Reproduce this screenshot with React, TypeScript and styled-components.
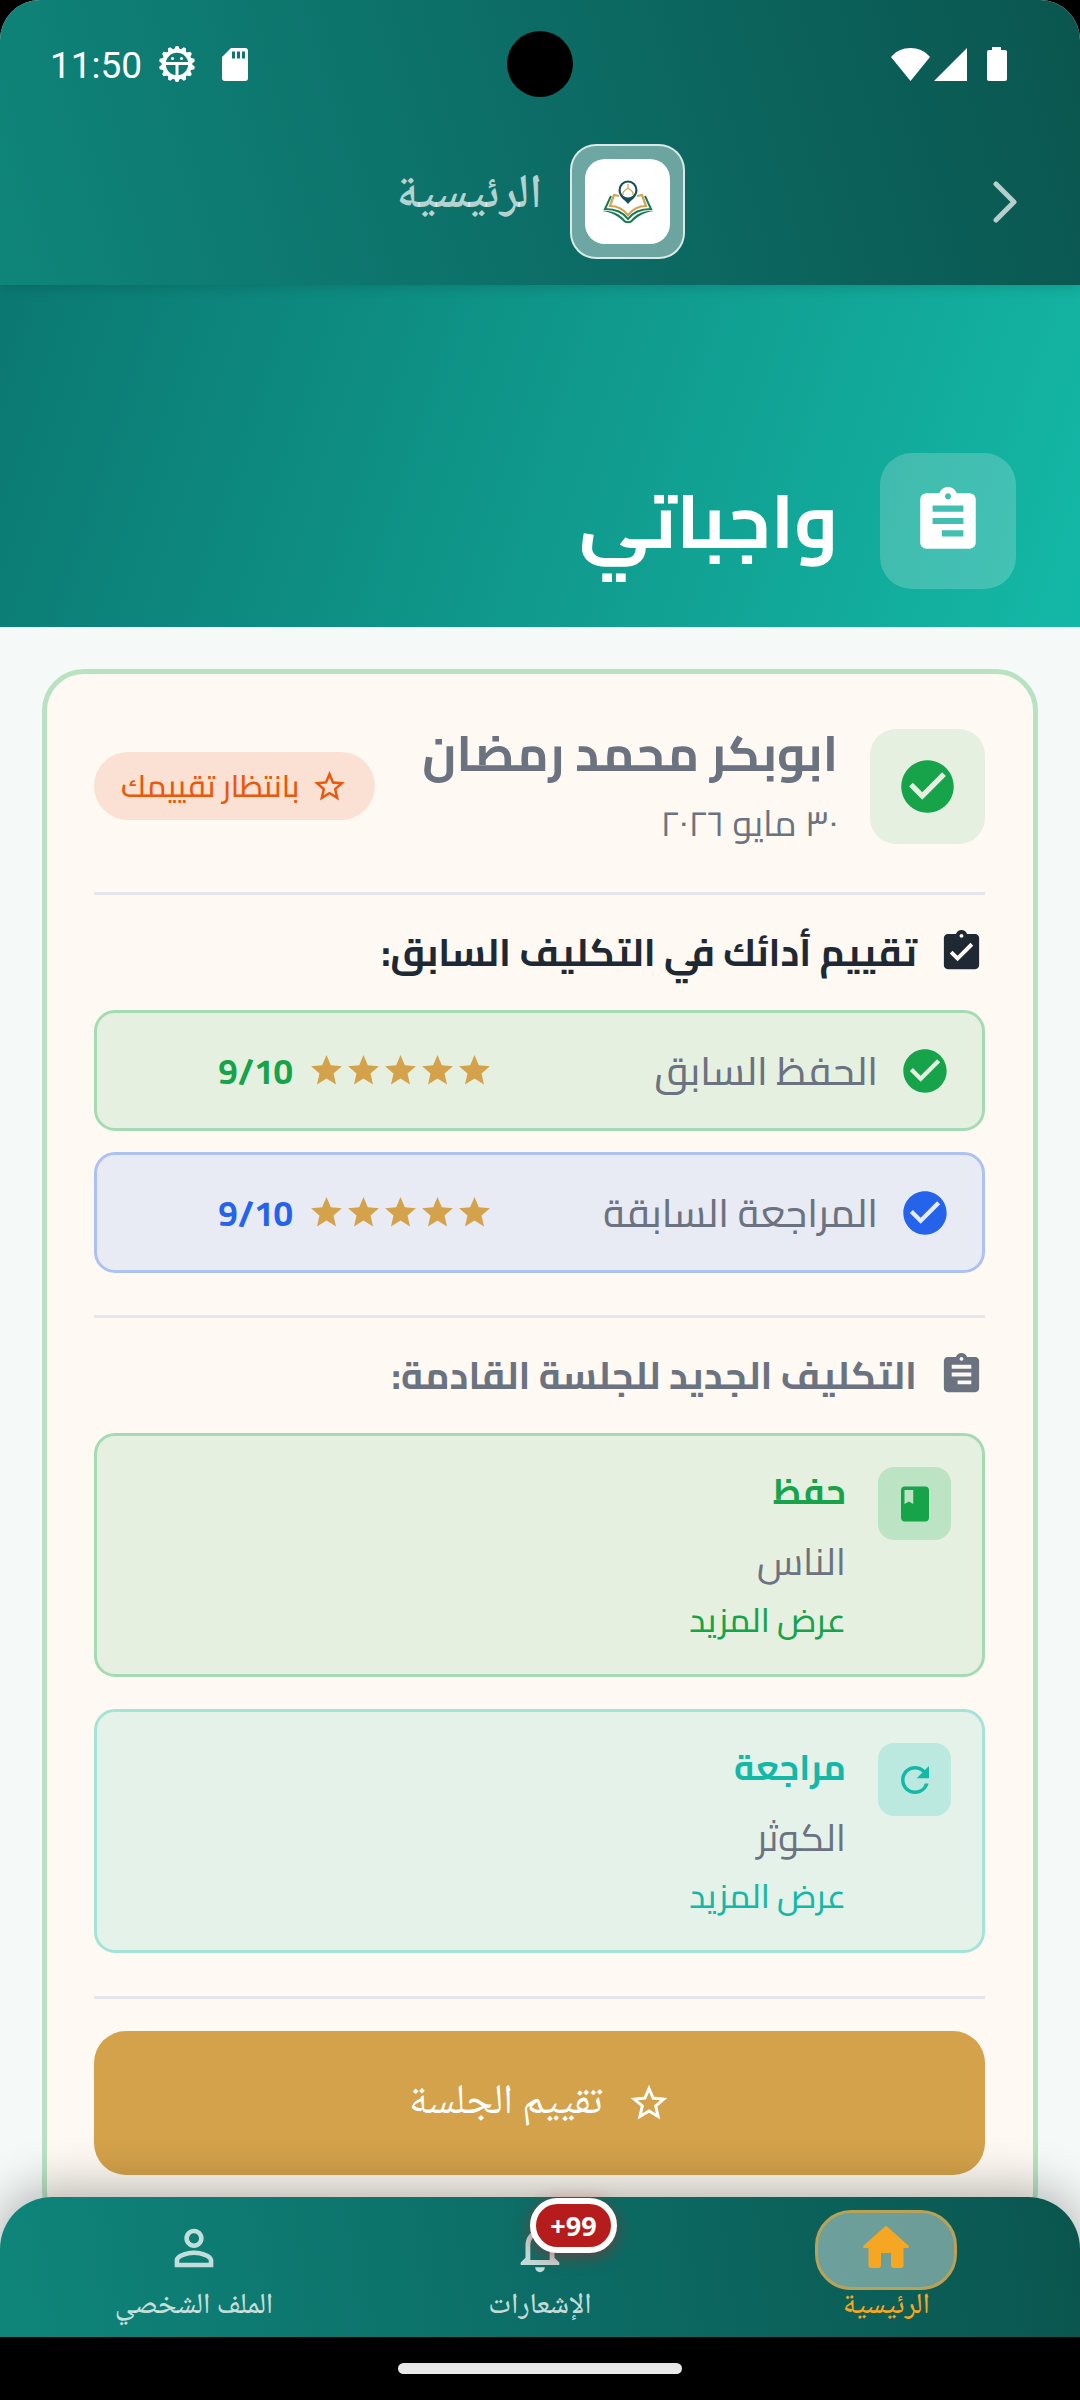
import React from "react";
import styled, { createGlobalStyle } from "styled-components";
import {
  MdAssignment,
  MdAssignmentTurnedIn,
  MdBook,
  MdCheckCircle,
  MdNotificationsNone,
  MdPersonOutline,
  MdRefresh,
  MdStar,
  MdStarBorder,
} from "react-icons/md";

const Global = createGlobalStyle`
  *, *::before, *::after { box-sizing: border-box; }
  body { margin: 0; background: #000; }
  h1, h2, h3, p, ul { margin: 0; padding: 0; font-weight: inherit; font-size: inherit; }
  button { border: 0; padding: 0; background: none; color: inherit; font: inherit; cursor: pointer; }
  svg { display: block; flex: none; }
`;

const arabic = `"Cairo", "DejaVu Sans", sans-serif`;
const naskh = `"Noto Naskh Arabic UI", "Noto Naskh Arabic", "Noto Sans Arabic", "DejaVu Sans", sans-serif`;

const Screen = styled.div`
  direction: rtl;
  display: flex;
  flex-direction: column;
  height: 100vh;
  overflow: hidden;
  border-radius: 40px 40px 0 0;
  background: #f5f9f8;
  font-family: ${arabic};
  color: #6b7280;
`;

const TopBar = styled.header`
  flex: none;
  position: relative;
  z-index: 1;
  background: linear-gradient(255deg, #0a564f, #0c6d66 50%, #0f857a);
  box-shadow: 0 2px 12px rgba(0, 0, 0, 0.15);
`;

const StatusBar = styled.div`
  direction: ltr;
  display: grid;
  grid-template-columns: 1fr auto 1fr;
  align-items: center;
  height: 128px;
  padding: 0 73px 0 50px;
  color: #fff;
  font: 400 37px/44px Roboto, sans-serif;
`;

const StatusGroup = styled.div<{ $end?: boolean }>`
  display: flex;
  align-items: center;
  justify-content: ${(p) => (p.$end ? "flex-end" : "flex-start")};
  gap: ${(p) => (p.$end ? "4px" : "16px")};
`;

const Clock = styled.span`
  padding-top: 4px;
`;

const StatusIcons = styled.span`
  display: flex;
  align-items: center;
  gap: 26px;
`;

const Camera = styled.span`
  width: 66px;
  height: 66px;
  margin-left: 23px;
  border-radius: 50%;
  background: #000;
`;

const TitleBar = styled.div`
  display: grid;
  grid-template-columns: 96px 1fr 96px;
  align-items: center;
  padding: 16px 27px 26px;
`;

const BackButton = styled.button`
  display: flex;
  justify-content: center;
  color: rgba(255, 255, 255, 0.7);
`;

const Brand = styled.div`
  display: flex;
  align-items: center;
  justify-content: center;
  gap: 28px;
`;

const LogoFrame = styled.span`
  display: flex;
  padding: 13px;
  border: 2px solid rgba(255, 255, 255, 0.75);
  border-radius: 26px;
  background: rgba(255, 255, 255, 0.4);
`;

const LogoTile = styled.span`
  display: flex;
  align-items: center;
  justify-content: center;
  width: 85px;
  height: 85px;
  border-radius: 20px;
  background: #fff;
`;

const BrandName = styled.p`
  padding-bottom: 12px;
  color: rgba(255, 255, 255, 0.7);
  font: 600 48px/60px ${naskh};
`;

const Hero = styled.section`
  flex: none;
  display: flex;
  align-items: center;
  gap: 42px;
  padding: 168px 64px 38px;
  background: linear-gradient(108deg, #0b7871, #14b8a6);
`;

const HeroIcon = styled.span`
  display: flex;
  align-items: center;
  justify-content: center;
  width: 136px;
  height: 136px;
  border-radius: 32px;
  background: rgba(255, 255, 255, 0.2);
  color: #fff;
`;

const HeroTitle = styled.h1`
  color: #fff;
  font-weight: 700;
  font-size: 75px;
  line-height: 100px;
`;

const Mirrored = styled.span`
  display: flex;
  transform: scaleX(-1);
`;

const Content = styled.main`
  flex: 1;
  min-height: 0;
  overflow: hidden;
  padding: 42px 42px 0;
`;

const Card = styled.article`
  min-height: 1540px;
  padding: 53px 48px 54px 47px;
  border: 5px solid #b8e2c2;
  border-radius: 42px;
  background: #fefaf3;
`;

const CardHead = styled.div`
  display: flex;
  align-items: center;
  gap: 32px;
  padding-bottom: 47px;
`;

const StateIcon = styled.span`
  flex: none;
  display: flex;
  align-items: center;
  justify-content: center;
  width: 115px;
  height: 115px;
  border-radius: 26px;
  background: #e6f0e0;
  color: #16a34a;
`;

const Teacher = styled.div`
  flex: 1;
  white-space: nowrap;
`;

const TeacherName = styled.h2`
  font-weight: 700;
  font-size: 49px;
  line-height: 52px;
`;

const SessionDate = styled.p`
  font-size: 36px;
  line-height: 44px;
  padding-top: 22px;
`;

const Pending = styled.span`
  flex: none;
  display: flex;
  align-items: center;
  gap: 12px;
  height: 68px;
  padding: 0 27px;
  border-radius: 34px;
  background: #fbe1d3;
  color: #ea580c;
  font-weight: 500;
  font-size: 31px;
  white-space: nowrap;
`;

const Rule = styled.hr`
  height: 3px;
  margin: 0;
  border: 0;
  background: #e5e7eb;
`;

const SectionTitle = styled.h3<{ $dark?: boolean }>`
  display: flex;
  align-items: center;
  gap: 21px;
  height: 115px;
  padding-bottom: 2px;
  color: ${(p) => (p.$dark ? "#1f2933" : "#6b7280")};
  font-weight: 700;
  font-size: 38px;
`;

const tones = {
  green: { ink: "#16a34a", fill: "#e6f0e0", line: "#a5dbb4", chip: "#bbe3c4" },
  blue: { ink: "#2563eb", fill: "#e8ebf3", line: "#adc2f3", chip: "#c6d4f5" },
  teal: { ink: "#14b8a6", fill: "#e5f2ea", line: "#a4e3d8", chip: "#bbe8df" },
};
type Tone = keyof typeof tones;

const Scores = styled.div`
  display: flex;
  flex-direction: column;
  gap: 21px;
  padding-bottom: 42px;
`;

const ScoreRow = styled.div<{ $tone: Tone }>`
  display: flex;
  align-items: center;
  height: 121px;
  padding: 0 31px;
  border: 3px solid ${(p) => tones[p.$tone].line};
  border-radius: 21px;
  background: ${(p) => tones[p.$tone].fill};
  color: ${(p) => tones[p.$tone].ink};
`;

const ScoreLabel = styled.p`
  flex: 1;
  padding-inline-start: 21px;
  color: #6b7280;
  font-weight: 500;
  font-size: 39px;
  white-space: nowrap;
`;

const Stars = styled.div`
  display: flex;
  color: #d4a24a;
`;

const ScoreValue = styled.p`
  direction: ltr;
  width: 180px;
  padding-right: 15px;
  text-align: right;
  font-weight: 700;
  font-size: 35px;
`;

const Tasks = styled.div`
  display: flex;
  flex-direction: column;
  gap: 32px;
  padding-bottom: 43px;
`;

const TaskBox = styled.section<{ $tone: Tone }>`
  display: flex;
  align-items: flex-start;
  gap: 32px;
  padding: 31px 31px 27px;
  border: 3px solid ${(p) => tones[p.$tone].line};
  border-radius: 21px;
  background: ${(p) => tones[p.$tone].fill};
  color: ${(p) => tones[p.$tone].ink};
`;

const TaskIcon = styled.span<{ $tone: Tone }>`
  display: flex;
  align-items: center;
  justify-content: center;
  width: 73px;
  height: 73px;
  border-radius: 16px;
  background: ${(p) => tones[p.$tone].chip};
`;

const TaskText = styled.div`
  display: flex;
  flex-direction: column;
  align-items: flex-start;
`;

const TaskName = styled.h4`
  margin: 0;
  font-weight: 700;
  font-size: 35px;
  line-height: 48px;
`;

const TaskSura = styled.p`
  padding-top: 14px;
  color: #6b7280;
  font-size: 38px;
  line-height: 64px;
`;

const MoreButton = styled.button`
  font-weight: 500;
  font-size: 33px;
  line-height: 54px;
`;

const RateButton = styled.button`
  display: flex;
  align-items: center;
  justify-content: center;
  gap: 24px;
  width: 100%;
  height: 144px;
  margin-top: 32px;
  border-radius: 32px;
  background: #d4a24a;
  color: #fff;
  font: 400 42px/60px ${naskh};
`;

const NavBar = styled.nav`
  flex: none;
  position: relative;
  display: grid;
  grid-template-columns: repeat(3, 1fr);
  height: 140px;
  padding: 0 21px;
  border-radius: 52px 52px 0 0;
  background: linear-gradient(263deg, #0a564f, #0c6d66 50%, #0f857a);
  box-shadow: 0 -8px 50px rgba(0, 0, 0, 0.3);
`;

const BottomArea = styled.footer`
  flex: none;
  margin-top: -54px;
  background: linear-gradient(transparent 54px, #000 54px);
`;

const NavItem = styled.button<{ $active?: boolean }>`
  display: flex;
  flex-direction: column;
  align-items: center;
  padding-top: 13px;
  color: ${(p) => (p.$active ? "#f5a623" : "rgba(255, 255, 255, 0.75)")};
  font: 500 29px/32px ${naskh};
`;

const NavIcon = styled.span<{ $active?: boolean }>`
  position: relative;
  display: flex;
  align-items: center;
  justify-content: center;
  width: 142px;
  height: 80px;
  padding-bottom: 4px;
  border: 3px solid ${(p) => (p.$active ? "#b9a257" : "transparent")};
  border-radius: 36px;
  background: ${(p) => (p.$active ? "rgba(255, 255, 255, 0.4)" : "transparent")};
`;

const Badge = styled.span`
  direction: ltr;
  position: absolute;
  top: -15px;
  left: 58px;
  width: 87px;
  height: 55px;
  border: 6px solid #fff;
  border-radius: 28px;
  background: #b71c1c;
  box-shadow: 0 4px 16px rgba(183, 28, 28, 0.5);
  color: #fff;
  text-align: center;
  font: 700 27px/43px "Noto Sans", sans-serif;
`;

const GestureArea = styled.div`
  display: flex;
  align-items: center;
  justify-content: center;
  height: 63px;
  background: #000;
`;

const GestureBar = styled.span`
  width: 284px;
  height: 11px;
  border-radius: 6px;
  background: #ebebeb;
`;

const teeth = Array.from({ length: 14 }, (_, i) => (i * 360) / 14);

const BugIcon = () => (
  <svg width="38" height="38" viewBox="0 0 38 38" fill="none" stroke="#fff">
    {teeth.map((a) => (
      <path key={a} d="M15.500 5.500 17.800 1h2.400l2.300 4.500z" fill="#fff" stroke="none" transform={`rotate(${a} 19 19)`} />
    ))}
    <circle cx="19" cy="19" r="13.200" strokeWidth="4" />
    <path d="M6 18.500h26M19 19v14" strokeWidth="3" />
    <circle cx="14.500" cy="13.500" r="1.500" fill="#fff" stroke="none" />
    <circle cx="23.500" cy="13.500" r="1.500" fill="#fff" stroke="none" />
  </svg>
);

const CardIcon = () => (
  <svg width="26" height="33" viewBox="0 0 26 33">
    <path
      fill="#fff"
      fillRule="evenodd"
      d="M9 0h14a3 3 0 0 1 3 3v27a3 3 0 0 1-3 3H3a3 3 0 0 1-3-3V9zM10 3.500v7h3v-7zM15 3.500v7h3v-7zM20 3.500v7h3v-7z"
    />
  </svg>
);

const WifiIcon = () => (
  <svg width="39" height="33" viewBox="0 0 39 33">
    <path fill="#fff" d="M19.500 33 0 9C5 3 12 0 19.500 0S34 3 39 9z" />
  </svg>
);

const SignalIcon = () => (
  <svg width="33" height="33" viewBox="0 0 33 33">
    <path fill="#fff" d="M33 0v33H0z" />
  </svg>
);

const BatteryIcon = () => (
  <svg width="36" height="34" viewBox="0 0 36 34">
    <path fill="#fff" d="M21 0h9v3h4a2 2 0 0 1 2 2v27a2 2 0 0 1-2 2H18a2 2 0 0 1-2-2V5a2 2 0 0 1 2-2h3z" />
  </svg>
);

const Chevron = () => (
  <svg width="24" height="42" viewBox="0 0 24 42" fill="none">
    <path d="m3 3 18 18L3 39" stroke="currentColor" strokeWidth="5" strokeLinecap="round" strokeLinejoin="round" />
  </svg>
);

const Logo = () => (
  <svg width="54" height="44" viewBox="0 0 54 44" fill="none">
    <path d="M10 16 4 29c9 0 18 3 23 10 5-7 14-10 23-10l-6-13" stroke="#187a52" strokeWidth="2" />
    <path d="M1 31c10-1 17 3 22 8 2 3 6 3 8 0 5-5 12-9 22-8-9 1-16 5-21 10-2 3-8 3-10 0C17 36 10 32 1 31z" fill="#187a52" />
    <path d="M18 16l-5-1-4 11c8 0 14 4 18 9 4-5 10-9 18-9l-4-11-5 1" stroke="#d2a351" strokeWidth="2.200" />
    <path d="M27 24c-3-4-9.500-7-9.500-14a9.500 9.500 0 0 1 19 0c0 7-6.500 10-9.500 14z" fill="#154f5c" />
    <circle cx="27" cy="10" r="7.400" fill="#fff" />
    <path d="M22 15v-2c1-3 3-3 5-5 2 2 4 2 5 5v2M27 8V4" stroke="#d2a351" strokeWidth="1.200" />
  </svg>
);

const HomeIcon = () => (
  <svg width="60" height="60" viewBox="0 0 24 24" fill="currentColor">
    <path d="M10 19v-5h4v5c0 .55.45 1 1 1h3c.55 0 1-.45 1-1v-7h1.700c.46 0 .68-.57.33-.87L12.670 3.600c-.38-.34-.96-.34-1.340 0l-8.360 7.530c-.34.3-.13.87.33.87H5v7c0 .55.45 1 1 1h3c.55 0 1-.45 1-1z" />
  </svg>
);

const scores: { label: string; value: string; tone: Tone }[] = [
  { label: "الحفظ السابق", value: "9/10", tone: "green" },
  { label: "المراجعة السابقة", value: "9/10", tone: "blue" },
];

const tasks: { name: string; sura: string; tone: Tone; icon: React.ReactNode }[] = [
  { name: "حفظ", sura: "الناس", tone: "green", icon: <MdBook size={42} /> },
  { name: "مراجعة", sura: "الكوثر", tone: "teal", icon: <MdRefresh size={42} /> },
];

export default function App() {
  return (
    <>
      <Global />
      <Screen lang="ar">
        <TopBar>
          <StatusBar>
            <StatusGroup>
              <Clock>11:50</Clock>
              <StatusIcons>
                <BugIcon />
                <CardIcon />
              </StatusIcons>
            </StatusGroup>
            <Camera />
            <StatusGroup $end>
              <WifiIcon />
              <SignalIcon />
              <BatteryIcon />
            </StatusGroup>
          </StatusBar>
          <TitleBar>
            <BackButton aria-label="رجوع">
              <Chevron />
            </BackButton>
            <Brand>
              <LogoFrame>
                <LogoTile>
                  <Logo />
                </LogoTile>
              </LogoFrame>
              <BrandName>الرئيسية</BrandName>
            </Brand>
          </TitleBar>
        </TopBar>

        <Hero>
          <HeroIcon>
            <Mirrored>
              <MdAssignment size={74} />
            </Mirrored>
          </HeroIcon>
          <HeroTitle>واجباتي</HeroTitle>
        </Hero>

        <Content>
          <Card>
            <CardHead>
              <StateIcon>
                <MdCheckCircle size={63} />
              </StateIcon>
              <Teacher>
                <TeacherName>ابوبكر محمد رمضان</TeacherName>
                <SessionDate>٣٠ مايو ٢٠٢٦</SessionDate>
              </Teacher>
              <Pending>
                <MdStarBorder size={37} />
                بانتظار تقييمك
              </Pending>
            </CardHead>
            <Rule />
            <SectionTitle $dark>
              <MdAssignmentTurnedIn size={47} />
              تقييم أدائك في التكليف السابق:
            </SectionTitle>
            <Scores>
              {scores.map((s) => (
                <ScoreRow key={s.label} $tone={s.tone}>
                  <MdCheckCircle size={52} />
                  <ScoreLabel>{s.label}</ScoreLabel>
                  <Stars>
                    {[1, 2, 3, 4, 5].map((n) => (
                      <MdStar key={n} size={37} />
                    ))}
                  </Stars>
                  <ScoreValue>{s.value}</ScoreValue>
                </ScoreRow>
              ))}
            </Scores>
            <Rule />
            <SectionTitle>
              <Mirrored>
                <MdAssignment size={47} />
              </Mirrored>
              التكليف الجديد للجلسة القادمة:
            </SectionTitle>
            <Tasks>
              {tasks.map((t) => (
                <TaskBox key={t.name} $tone={t.tone}>
                  <TaskIcon $tone={t.tone}>{t.icon}</TaskIcon>
                  <TaskText>
                    <TaskName>{t.name}</TaskName>
                    <TaskSura>{t.sura}</TaskSura>
                    <MoreButton>عرض المزيد</MoreButton>
                  </TaskText>
                </TaskBox>
              ))}
            </Tasks>
            <Rule />
            <RateButton>
              <MdStarBorder size={44} />
              تقييم الجلسة
            </RateButton>
          </Card>
        </Content>

        <BottomArea>
          <NavBar>
            <NavItem $active>
              <NavIcon $active>
                <HomeIcon />
              </NavIcon>
              الرئيسية
            </NavItem>
            <NavItem>
              <NavIcon>
                <MdNotificationsNone size={58} />
                <Badge>+99</Badge>
              </NavIcon>
              الإشعارات
            </NavItem>
            <NavItem>
              <NavIcon>
                <MdPersonOutline size={58} />
              </NavIcon>
              الملف الشخصي
            </NavItem>
          </NavBar>
          <GestureArea>
            <GestureBar />
          </GestureArea>
        </BottomArea>
      </Screen>
    </>
  );
}
